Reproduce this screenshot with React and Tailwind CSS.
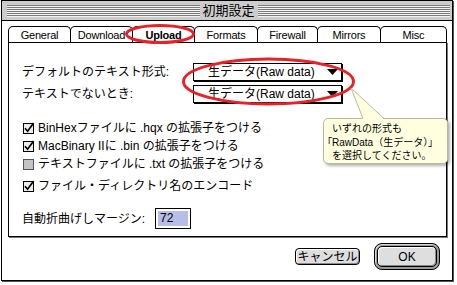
import React from 'react';

const tabs = [
  { label: 'General', w: 'w-[63px]' },
  { label: 'Download', w: 'w-[63px]' },
  { label: 'Upload', w: 'w-[63px]', active: true },
  { label: 'Formats', w: 'w-[64px]' },
  { label: 'Firewall', w: 'w-[61px]' },
  { label: 'Mirrors', w: 'w-[64px]' },
  { label: 'Misc', w: 'w-[67px]' },
];

function Stripes() {
  return (
    <div className="flex-1 h-[12px] bg-[image:repeating-linear-gradient(to_bottom,#7b7b7b_0px,#7b7b7b_1px,#f4f4f4_1px,#f4f4f4_2px)]" />
  );
}

function Popup() {
  return (
    <div className="w-[149px] h-[18px] border border-black bg-white shadow-[1px_1px_0_#000] flex items-center pl-[14px] text-[12px] leading-[14px]">
      <span>生データ(Raw data)</span>
      <svg className="ml-auto mr-[3px]" width="11" height="6" viewBox="0 0 11 6">
        <path d="M0 0H11L5.5 6Z" fill="#000" />
      </svg>
    </div>
  );
}

function CheckBox({ checked }) {
  return (
    <svg width="13" height="12" viewBox="0 0 13 12" className="shrink-0">
      <rect
        x="1.5"
        y="1.5"
        width="10"
        height="10"
        fill={checked ? '#ececec' : '#c4c4c4'}
        stroke={checked ? '#000' : '#555'}
      />
      {checked && (
        <path d="M3 6.2 L5.6 9.2 L11.6 1" stroke="#000" strokeWidth="1.7" fill="none" />
      )}
    </svg>
  );
}

function CheckRow({ checked, children, className = '' }) {
  return (
    <div className={`flex items-center h-[18px] ${className}`}>
      <CheckBox checked={checked} />
      <span className="ml-[3px] text-[12px] leading-[14px] whitespace-nowrap">{children}</span>
    </div>
  );
}

export default function App() {
  return (
    <div className="relative w-[457px] h-[285px] bg-white overflow-hidden text-black [font-family:'Liberation_Sans','Noto_Sans_CJK_JP',sans-serif]">
      <div className="ml-[1px] w-[452px] h-[281px] border border-black shadow-[1px_1px_0_#555] flex flex-col bg-white">
        {/* title bar */}
        <div className="h-[20px] shrink-0 bg-[#cccccc] border-b border-black flex items-center pl-[5px] pr-[2px]">
          <Stripes />
          <div className="px-[3px] text-[13px] leading-[14px]">初期設定</div>
          <Stripes />
        </div>

        {/* tabs + panel */}
        <div className="pl-[6px] pt-[5px] flex flex-col">
          <div className="flex h-[16px] w-[439px]">
            {tabs.map((t, i) => (
              <div
                key={t.label}
                className={`${t.w} h-[16px] shrink-0 border-t border-x border-black rounded-t-[5px] flex items-center justify-center pt-[1px] text-[11px] leading-[12px] tracking-[-0.2px] ${i ? '-ml-px' : ''} ${t.active ? 'font-bold' : ''}`}
              >
                {t.label}
              </div>
            ))}
          </div>
          <div className="w-[439px] h-[195px] border border-black shadow-[1px_1px_0_#7a7a7a] flex flex-col pl-[13px] pt-[19px]">
            <div className="flex items-center h-[19px]">
              <span className="w-[171px] text-[12px] leading-[14px]">デフォルトのテキスト形式:</span>
              <Popup />
            </div>
            <div className="flex items-center h-[19px] mt-[3px]">
              <span className="w-[171px] text-[12px] leading-[14px]">テキストでないとき:</span>
              <Popup />
            </div>

            <CheckRow checked className="mt-[16px]">BinHexファイルに .hqx の拡張子をつける</CheckRow>
            <CheckRow checked>MacBinary IIに .bin の拡張子をつける</CheckRow>
            <CheckRow checked={false}>テキストファイルに .txt の拡張子をつける</CheckRow>
            <CheckRow checked className="mt-[4px]">ファイル・ディレクトリ名のエンコード</CheckRow>

            <div className="flex items-center mt-[13px]">
              <span className="w-[133px] text-[12px] leading-[14px]">自動折曲げしマージン:</span>
              <div className="w-[36px] h-[21px] border border-black p-[2px] bg-white">
                <div className="h-full bg-[#b6bde6] text-[12px] leading-[15px] pl-[2px]">72</div>
              </div>
            </div>
          </div>
        </div>

        {/* buttons */}
        <div className="flex justify-end items-center gap-[14px] pr-[12px] pt-[6px]">
          <div className="w-[65px] h-[17px] rounded-[4px] border border-black bg-[#dedede] shadow-[inset_1px_1px_0_#fff,inset_-1px_-1px_0_#8a8a8a] text-[12px] leading-[14px] flex items-center justify-center">
            キャンセル
          </div>
          <div className="w-[66px] h-[27px] rounded-[8px] border border-black bg-[#9a9a9a] p-[2px] shadow-[inset_1px_1px_0_#d8d8d8]">
            <div className="w-full h-full rounded-[5px] border border-black bg-[#dedede] shadow-[inset_1px_1px_0_#fff,inset_-1px_-1px_0_#8a8a8a] flex items-center justify-center text-[12px] leading-[14px]">
              OK
            </div>
          </div>
        </div>
      </div>

      {/* red annotation ellipses */}
      <svg className="absolute left-0 top-0 pointer-events-none" width="457" height="285">
        <ellipse cx="160" cy="34" rx="33.5" ry="8.5" fill="none" stroke="#e6232a" strokeWidth="3" />
        <ellipse cx="268.5" cy="81.5" rx="85" ry="22.5" fill="none" stroke="#e6232a" strokeWidth="3" />
      </svg>

      {/* callout */}
      <div className="absolute left-[323px] top-[118px] w-[125px] h-[46px] rounded-[5px] border border-[#b9b9a0] bg-[#ffffe0] shadow-[2px_2px_3px_rgba(0,0,0,0.3)] pl-[3px] pt-[3px] text-[10px] leading-[13.5px] whitespace-nowrap">
        <div className="pl-[5px]">いずれの形式も</div>
        <div>
          <span className="[font-feature-settings:'palt']">「</span>RawData（生データ）<span className="[font-feature-settings:'palt']">」</span>
        </div>
        <div className="pl-[5px]">を選択してください。</div>
      </div>
      <svg className="absolute left-0 top-0 pointer-events-none" width="457" height="285">
        <polygon points="351,88 363,119.5 384,119.5" fill="#ffffe0" />
        <path d="M363,118.5 L351,88 L384,118.5" fill="none" stroke="#b9b9a0" strokeWidth="1" />
      </svg>
    </div>
  );
}
